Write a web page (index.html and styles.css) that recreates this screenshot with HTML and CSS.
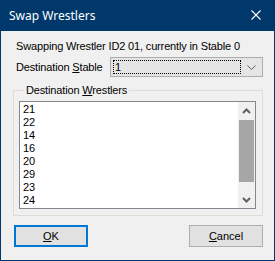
FILE: index.html
```html
<!DOCTYPE html>
<html lang="en">
<head>
  <meta charset="UTF-8" />
  <title>Swap Wrestlers</title>
  <link rel="stylesheet" href="styles.css">
</head>
<body>

<div class="window">
  <div class="titlebar">
    <span class="title">Swap Wrestlers</span>
    <svg class="close" width="10" height="10" viewBox="0 0 10 10">
      <path d="M0.5 0.5 L9.5 9.5 M9.5 0.5 L0.5 9.5" stroke="#fff" stroke-width="1.1" fill="none"/>
    </svg>
  </div>

  <div class="content">
    <p class="info">Swapping Wrestler ID2 01, currently in Stable 0</p>

    <div class="row">
      <label class="row-label">Destination <u>S</u>table</label>
      <div class="combo">
        <span class="combo-value">1</span>
        <svg class="combo-arrow" width="9" height="5" viewBox="0 0 9 5">
          <path d="M0.5 0.5 L4.5 4.5 L8.5 0.5" stroke="#606060" stroke-width="1" fill="none"/>
        </svg>
      </div>
    </div>

    <fieldset class="group">
      <legend>Destination <u>W</u>restlers</legend>
      <div class="listbox">
        <ul class="items">
          <li>21</li>
          <li>22</li>
          <li>14</li>
          <li>16</li>
          <li>20</li>
          <li>29</li>
          <li>23</li>
          <li>24</li>
        </ul>
        <div class="scrollbar">
          <div class="sb-btn">
            <svg width="9" height="6" viewBox="0 0 9 6">
              <path d="M1 5 L4.5 1.5 L8 5" stroke="#606060" stroke-width="2" fill="none"/>
            </svg>
          </div>
          <div class="sb-track"><div class="sb-thumb"></div></div>
          <div class="sb-btn">
            <svg width="9" height="6" viewBox="0 0 9 6">
              <path d="M1 1 L4.5 4.5 L8 1" stroke="#606060" stroke-width="2" fill="none"/>
            </svg>
          </div>
        </div>
      </div>
    </fieldset>

    <div class="buttons">
      <button class="btn btn-default"><u>O</u>K</button>
      <button class="btn"><u>C</u>ancel</button>
    </div>
  </div>
</div>

</body>
</html>
```

FILE: styles.css
```css
* { box-sizing: border-box; }

body {
  margin: 0;
  font-family: 'Liberation Sans', Arial, sans-serif;
  font-size: 11px;
  letter-spacing: -0.15px;
  color: #000;
}

.window {
  width: 275px;
  height: 261px;
  background: #f0f0f0;
  border: 1px solid #00386b;
  border-top: none;
  display: flex;
  flex-direction: column;
}

.titlebar {
  height: 31px;
  background: #00386b;
  display: flex;
  align-items: center;
  justify-content: space-between;
  padding: 0 13px 0 8px;
}

.title {
  font-family: 'Noto Sans', sans-serif;
  font-size: 12px;
  letter-spacing: 0;
  color: #fff;
  margin-top: -1px;
}

.close {
  display: block;
  margin-top: -1px;
}

.content {
  padding: 9px 11px 0 12px;
}

.info {
  margin: 0 0 0 3px;
  line-height: 13px;
}

.row {
  display: flex;
  align-items: center;
  margin-top: 4px;
}

.row-label {
  width: 97px;
  padding-left: 3px;
}

.combo {
  flex: 1;
  height: 20px;
  background: #e5e5e5;
  border: 1px solid #adadad;
  display: flex;
  align-items: center;
  padding: 2px;
}

.combo-value {
  flex: 1;
  height: 14px;
  line-height: 12px;
  border: 1px dotted #000;
  padding-left: 1px;
}

.combo-arrow {
  display: block;
  margin: 0 4px 0 6px;
}

.group {
  margin: 7px 0 0 0;
  padding: 4px 6px 6px 5px;
  border: 1px solid #dcdcdc;
  min-width: 0;
}

.group legend {
  padding: 0 2px;
  margin-left: 5px;
  line-height: 13px;
}

.listbox {
  height: 108px;
  background: #fff;
  border: 1px solid #828790;
  display: flex;
}

.items {
  flex: 1;
  list-style: none;
  margin: 0;
  padding: 1px 0 0 3px;
}

.items li {
  line-height: 13px;
}

.scrollbar {
  width: 17px;
  background: #f0f0f0;
  display: flex;
  flex-direction: column;
}

.sb-btn {
  height: 17px;
  display: flex;
  align-items: center;
  justify-content: center;
}

.sb-track {
  flex: 1;
  padding: 1px 1px 0 1px;
}

.sb-thumb {
  height: 62px;
  background: #a6a6a6;
}

.buttons {
  display: flex;
  justify-content: space-between;
  margin-top: 9px;
  padding: 0 0 0 1px;
}

.btn {
  width: 74px;
  height: 22px;
  font-family: 'Liberation Sans', Arial, sans-serif;
  font-size: 11px;
  color: #000;
  background: #e1e1e1;
  border: 1px solid #adadad;
  padding: 0;
}

.btn-default {
  border: 2px solid #0078d7;
}
```
